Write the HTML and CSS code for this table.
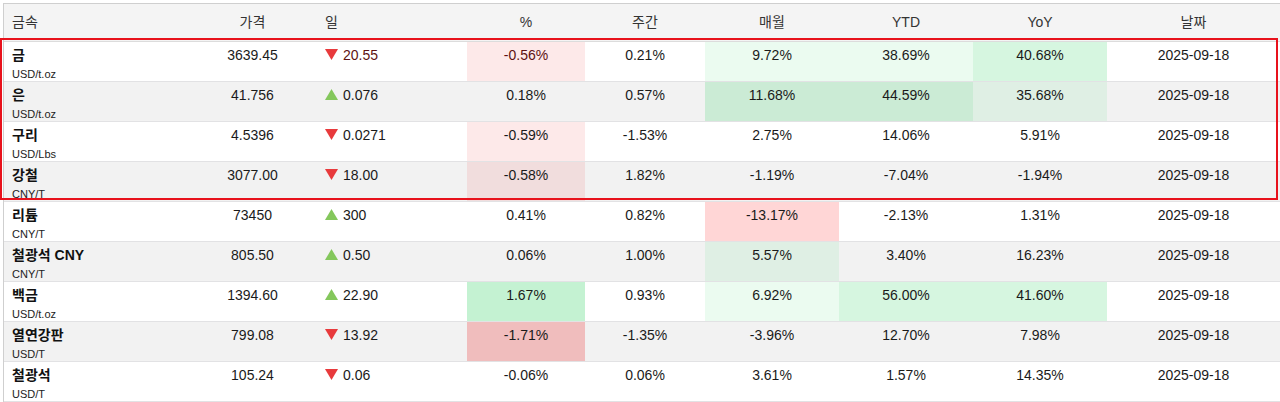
FILE: index.html
```html
<!DOCTYPE html>
<html lang="ko">
<head>
<meta charset="utf-8">
<title>금속</title>
<link rel="stylesheet" href="styles.css">
</head>
<body>
<div class="table">
  <div class="row head">
    <div class="c name">금속</div>
    <div class="c">가격</div>
    <div class="c chg">일</div>
    <div class="c">%</div>
    <div class="c">주간</div>
    <div class="c">매월</div>
    <div class="c">YTD</div>
    <div class="c">YoY</div>
    <div class="c">날짜</div>
  </div>
  <div class="group">
    <div class="row">
      <div class="c name"><b>금</b><span class="unit">USD/t.oz</span></div>
      <div class="c">3639.45</div>
      <div class="c chg"><svg class="tri" viewBox="0 0 13 11"><path d="M0 0H13L6.5 11Z" class="dn"/></svg><span class="neg">20.55</span></div>
      <div class="c r1 neg">-0.56%</div>
      <div class="c">0.21%</div>
      <div class="c g1">9.72%</div>
      <div class="c g1">38.69%</div>
      <div class="c g2">40.68%</div>
      <div class="c">2025-09-18</div>
    </div>
    <div class="row alt">
      <div class="c name"><b>은</b><span class="unit">USD/t.oz</span></div>
      <div class="c">41.756</div>
      <div class="c chg"><svg class="tri" viewBox="0 0 13 11"><path d="M6.5 0L13 11H0Z" class="up"/></svg>0.076</div>
      <div class="c">0.18%</div>
      <div class="c">0.57%</div>
      <div class="c g2">11.68%</div>
      <div class="c g2">44.59%</div>
      <div class="c g1">35.68%</div>
      <div class="c">2025-09-18</div>
    </div>
    <div class="row">
      <div class="c name"><b>구리</b><span class="unit">USD/Lbs</span></div>
      <div class="c">4.5396</div>
      <div class="c chg"><svg class="tri" viewBox="0 0 13 11"><path d="M0 0H13L6.5 11Z" class="dn"/></svg>0.0271</div>
      <div class="c r1">-0.59%</div>
      <div class="c">-1.53%</div>
      <div class="c">2.75%</div>
      <div class="c">14.06%</div>
      <div class="c">5.91%</div>
      <div class="c">2025-09-18</div>
    </div>
    <div class="row alt">
      <div class="c name"><b>강철</b><span class="unit">CNY/T</span></div>
      <div class="c">3077.00</div>
      <div class="c chg"><svg class="tri" viewBox="0 0 13 11"><path d="M0 0H13L6.5 11Z" class="dn"/></svg>18.00</div>
      <div class="c r1">-0.58%</div>
      <div class="c">1.82%</div>
      <div class="c">-1.19%</div>
      <div class="c">-7.04%</div>
      <div class="c">-1.94%</div>
      <div class="c">2025-09-18</div>
    </div>
  </div>
  <div class="row">
    <div class="c name"><b>리튬</b><span class="unit">CNY/T</span></div>
    <div class="c">73450</div>
    <div class="c chg"><svg class="tri" viewBox="0 0 13 11"><path d="M6.5 0L13 11H0Z" class="up"/></svg>300</div>
    <div class="c">0.41%</div>
    <div class="c">0.82%</div>
    <div class="c r2">-13.17%</div>
    <div class="c">-2.13%</div>
    <div class="c">1.31%</div>
    <div class="c">2025-09-18</div>
  </div>
  <div class="row alt">
    <div class="c name"><b>철광석 CNY</b><span class="unit">CNY/T</span></div>
    <div class="c">805.50</div>
    <div class="c chg"><svg class="tri" viewBox="0 0 13 11"><path d="M6.5 0L13 11H0Z" class="up"/></svg>0.50</div>
    <div class="c">0.06%</div>
    <div class="c">1.00%</div>
    <div class="c g1">5.57%</div>
    <div class="c">3.40%</div>
    <div class="c">16.23%</div>
    <div class="c">2025-09-18</div>
  </div>
  <div class="row">
    <div class="c name"><b>백금</b><span class="unit">USD/t.oz</span></div>
    <div class="c">1394.60</div>
    <div class="c chg"><svg class="tri" viewBox="0 0 13 11"><path d="M6.5 0L13 11H0Z" class="up"/></svg>22.90</div>
    <div class="c g3">1.67%</div>
    <div class="c">0.93%</div>
    <div class="c g1">6.92%</div>
    <div class="c g2">56.00%</div>
    <div class="c g2">41.60%</div>
    <div class="c">2025-09-18</div>
  </div>
  <div class="row alt">
    <div class="c name"><b>열연강판</b><span class="unit">USD/T</span></div>
    <div class="c">799.08</div>
    <div class="c chg"><svg class="tri" viewBox="0 0 13 11"><path d="M0 0H13L6.5 11Z" class="dn"/></svg>13.92</div>
    <div class="c r3">-1.71%</div>
    <div class="c">-1.35%</div>
    <div class="c">-3.96%</div>
    <div class="c">12.70%</div>
    <div class="c">7.98%</div>
    <div class="c">2025-09-18</div>
  </div>
  <div class="row">
    <div class="c name"><b>철광석</b><span class="unit">USD/T</span></div>
    <div class="c">105.24</div>
    <div class="c chg"><svg class="tri" viewBox="0 0 13 11"><path d="M0 0H13L6.5 11Z" class="dn"/></svg>0.06</div>
    <div class="c">-0.06%</div>
    <div class="c">0.06%</div>
    <div class="c">3.61%</div>
    <div class="c">1.57%</div>
    <div class="c">14.35%</div>
    <div class="c">2025-09-18</div>
  </div>
</div>
</body>
</html>
```

FILE: styles.css
```css
html, body {
  margin: 0;
  padding: 0;
  background: #fff;
}
body {
  font-family: "Liberation Sans", Arial, "Noto Sans CJK KR", sans-serif;
  font-size: 14px;
  line-height: 16px;
  color: #1a1a1a;
}
.table {
  margin: 3px 0 0 3px;
  border-top: 1px solid #cfcfcf;
  border-left: 1px solid #cfcfcf;
}
.row {
  display: grid;
  grid-template-columns: 185px 127px 151px 118px 120px 134px 134px 134px 1fr;
  height: 40px;
  box-sizing: border-box;
  border-bottom: 1px solid #e2e2e4;
  background: #fff;
}
.row.alt {
  background: #f2f2f2;
}
.row.head {
  height: 38px;
  background: #f4f4f4;
  border-bottom: 1px solid #dcdcdc;
  color: #333;
}
.head .c {
  display: flex;
  align-items: center;
  justify-content: center;
  padding: 0 0 1px;
}
.head .c.name {
  justify-content: flex-start;
  padding-left: 8px;
}
.head .c.chg {
  justify-content: flex-start;
  padding-left: 9px;
}
.c {
  text-align: center;
  padding: 5px 8px 0;
  white-space: nowrap;
}
.c.name {
  text-align: left;
  padding-left: 8px;
}
.c.name b {
  display: block;
  font-weight: bold;
  color: #111;
}
.unit {
  display: block;
  margin-top: 4px;
  font-size: 11px;
  line-height: 14px;
  color: #222;
}
.c.chg {
  text-align: left;
  padding-left: 9px;
}
.tri {
  display: inline-block;
  width: 13px;
  height: 11px;
  margin-right: 5px;
  vertical-align: 0;
}
.tri .dn { fill: #e83a3c; }
.tri .up { fill: #84c75c; }
.neg { color: #5e1212; }
.group {
  position: relative;
}
.group::after {
  content: "";
  position: absolute;
  top: -4px;
  left: -4px;
  right: 2px;
  bottom: 2px;
  border: 2px solid #e8121c;
  pointer-events: none;
}
.g1 { background: rgba(0, 200, 60, 0.08); }
.g2 { background: rgba(0, 200, 60, 0.16); }
.g3 { background: rgba(0, 200, 60, 0.23); }
.r1 { background: rgba(230, 0, 0, 0.085); }
.r2 { background: rgba(255, 0, 0, 0.16); }
.r3 { background: rgba(230, 0, 0, 0.22); }
```
